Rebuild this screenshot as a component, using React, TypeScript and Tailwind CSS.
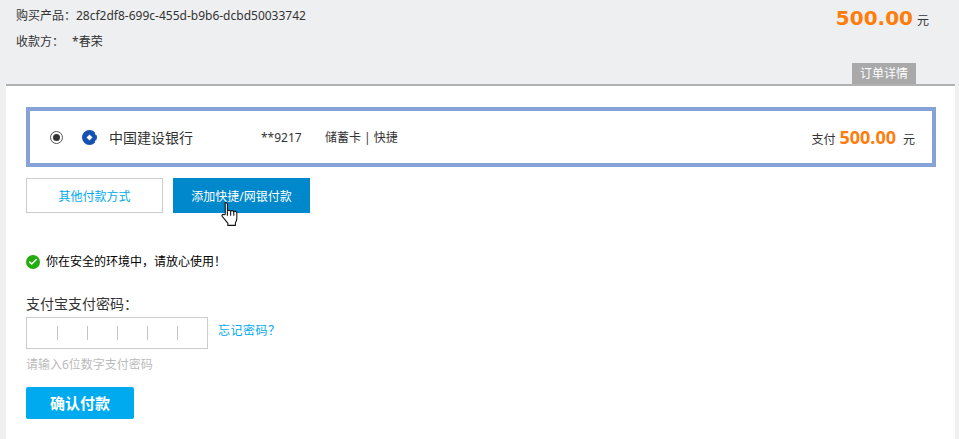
import { Check } from 'lucide-react'

const font = "font-['Noto_Sans','Noto_Sans_CJK_SC',sans-serif]"

function BankLogo() {
  return (
    <svg width="15" height="15" viewBox="0 0 16 16" className="block">
      <circle cx="8" cy="8" r="8" fill="#1451b0" />
      <path d="M8 4.800 11.200 8 8 11.200 4.800 8z" fill="#fff" />
      <path d="M13.500 3.200 17 1.500v2.700l-2 1.700zM13.500 12.800 17 14.500v-2.700l-2-1.700z" fill="#fff" />
    </svg>
  )
}

function HandCursor() {
  return (
    <svg width="20" height="26" viewBox="0 0 18 24" className="absolute left-[220px] top-[201px]">
      <path
        d="M5 1.500c1 0 1.600.7 1.600 1.600v6.200c.4-1 2.600-1 3 .2.5-.9 2.500-.8 2.900.4.6-.7 2.600-.5 2.800 1v5.300c0 1.500-.5 2.500-1.300 3.800v2.500H7v-2c-1.500-1.800-3-3.800-5.200-6.300-.8-1 .5-2.500 1.800-1.500l1-.2V3.100c0-.9-.5-1.600.4-1.600z"
        fill="#fff"
        stroke="#111"
        strokeWidth="1"
        strokeLinejoin="round"
      />
      <path d="M6.600 9.500v4M9.600 9.500v4M12.500 10v3.500" stroke="#111" strokeWidth="1" fill="none" />
    </svg>
  )
}

export default function App() {
  return (
    <div className={`${font} relative h-[439px] w-[959px] overflow-hidden bg-[#f0f0f0] text-[12px] text-[#333]`}>
      {/* order summary */}
      <div className="relative h-[84px] bg-[#eeeff1] pl-[16px] pt-[8px]">
        <p className="h-[16px] leading-[16px]">购买产品：28cf2df8-699c-455d-b9b6-dcbd50033742</p>
        <p className="mt-[10px] h-[16px] leading-[16px]">
          收款方：<span className="ml-[8px]">*春荣</span>
        </p>
        <div className="absolute right-[30px] top-[4px] flex items-baseline">
          <span className="font-['DejaVu_Sans',sans-serif] text-[20px] leading-[28px] font-bold text-[#ff7d0a]">500.00</span>
          <span className="ml-[4px] text-[12px]">元</span>
        </div>
        <div className="absolute bottom-0 left-[852px] flex h-[21px] w-[64px] items-center justify-center bg-[#a9a9a9] text-[12px] text-white">
          订单详情
        </div>
      </div>

      {/* payment panel */}
      <div className="ml-[6px] mr-[4px] h-[355px] border-t-2 border-[#b1b1b1] bg-white px-[20px] pt-[21px]">
        <div className="flex h-[60px] w-[910px] items-center border-4 border-[#86a3d8] pl-[20px] pr-[17px]">
          <span className="flex h-[13px] w-[13px] items-center justify-center rounded-full border border-[#555] bg-white">
            <span className="h-[7px] w-[7px] rounded-full bg-[#333]" />
          </span>
          <span className="ml-[19px]">
            <BankLogo />
          </span>
          <span className="ml-[12px] w-[151px] text-[14px]">中国建设银行</span>
          <span className="ml-[1px] mt-[1px] w-[64px]">**9217</span>
          <span className="mt-[1px]">储蓄卡&nbsp;|&nbsp;快捷</span>
          <span className="ml-auto mt-[1px] flex items-baseline">
            支付
            <span className="ml-[4px] mr-[7px] text-[18px] leading-[20px] font-bold text-[#ff7d0a]">500.00</span>
            元
          </span>
        </div>

        <div className="mt-[11px] flex gap-[10px]">
          <button className="h-[35px] w-[137px] border border-[#ccc] bg-white pt-[2px] text-[#00aaee]">其他付款方式</button>
          <button className="h-[35px] w-[137px] bg-[#0088cc] pt-[2px] text-white">添加快捷/网银付款</button>
        </div>

        <div className="mt-[41px] flex h-[16px] items-center text-black">
          <span className="flex h-[14px] w-[14px] items-center justify-center rounded-full bg-[#22ac0e]">
            <Check size={10} strokeWidth={3.5} className="text-white" />
          </span>
          <span className="ml-[6px]">你在安全的环境中，请放心使用！</span>
        </div>

        <p className="mt-[24px] h-[20px] text-[14px] leading-[20px]">支付宝支付密码：</p>
        <div className="mt-[3px] flex items-center">
          <div className="flex h-[32px] w-[182px] items-center border border-[#ccc] bg-white">
            {[0, 1, 2, 3, 4].map((i) => (
              <span key={i} className="ml-[29px] h-[14px] w-px bg-[#c4c4c4] first:ml-[30px]" />
            ))}
          </div>
          <a className="mb-[4px] ml-[10px] tracking-[0.5px] text-[#00aaee]">忘记密码？</a>
        </div>
        <p className="mt-[8px] h-[16px] leading-[16px] text-[#bbb]">请输入6位数字支付密码</p>
        <button className="mt-[14px] h-[32px] w-[108px] rounded-[2px] bg-[#00aaee] text-[15px] font-bold text-white">确认付款</button>
      </div>

      <HandCursor />
    </div>
  )
}
